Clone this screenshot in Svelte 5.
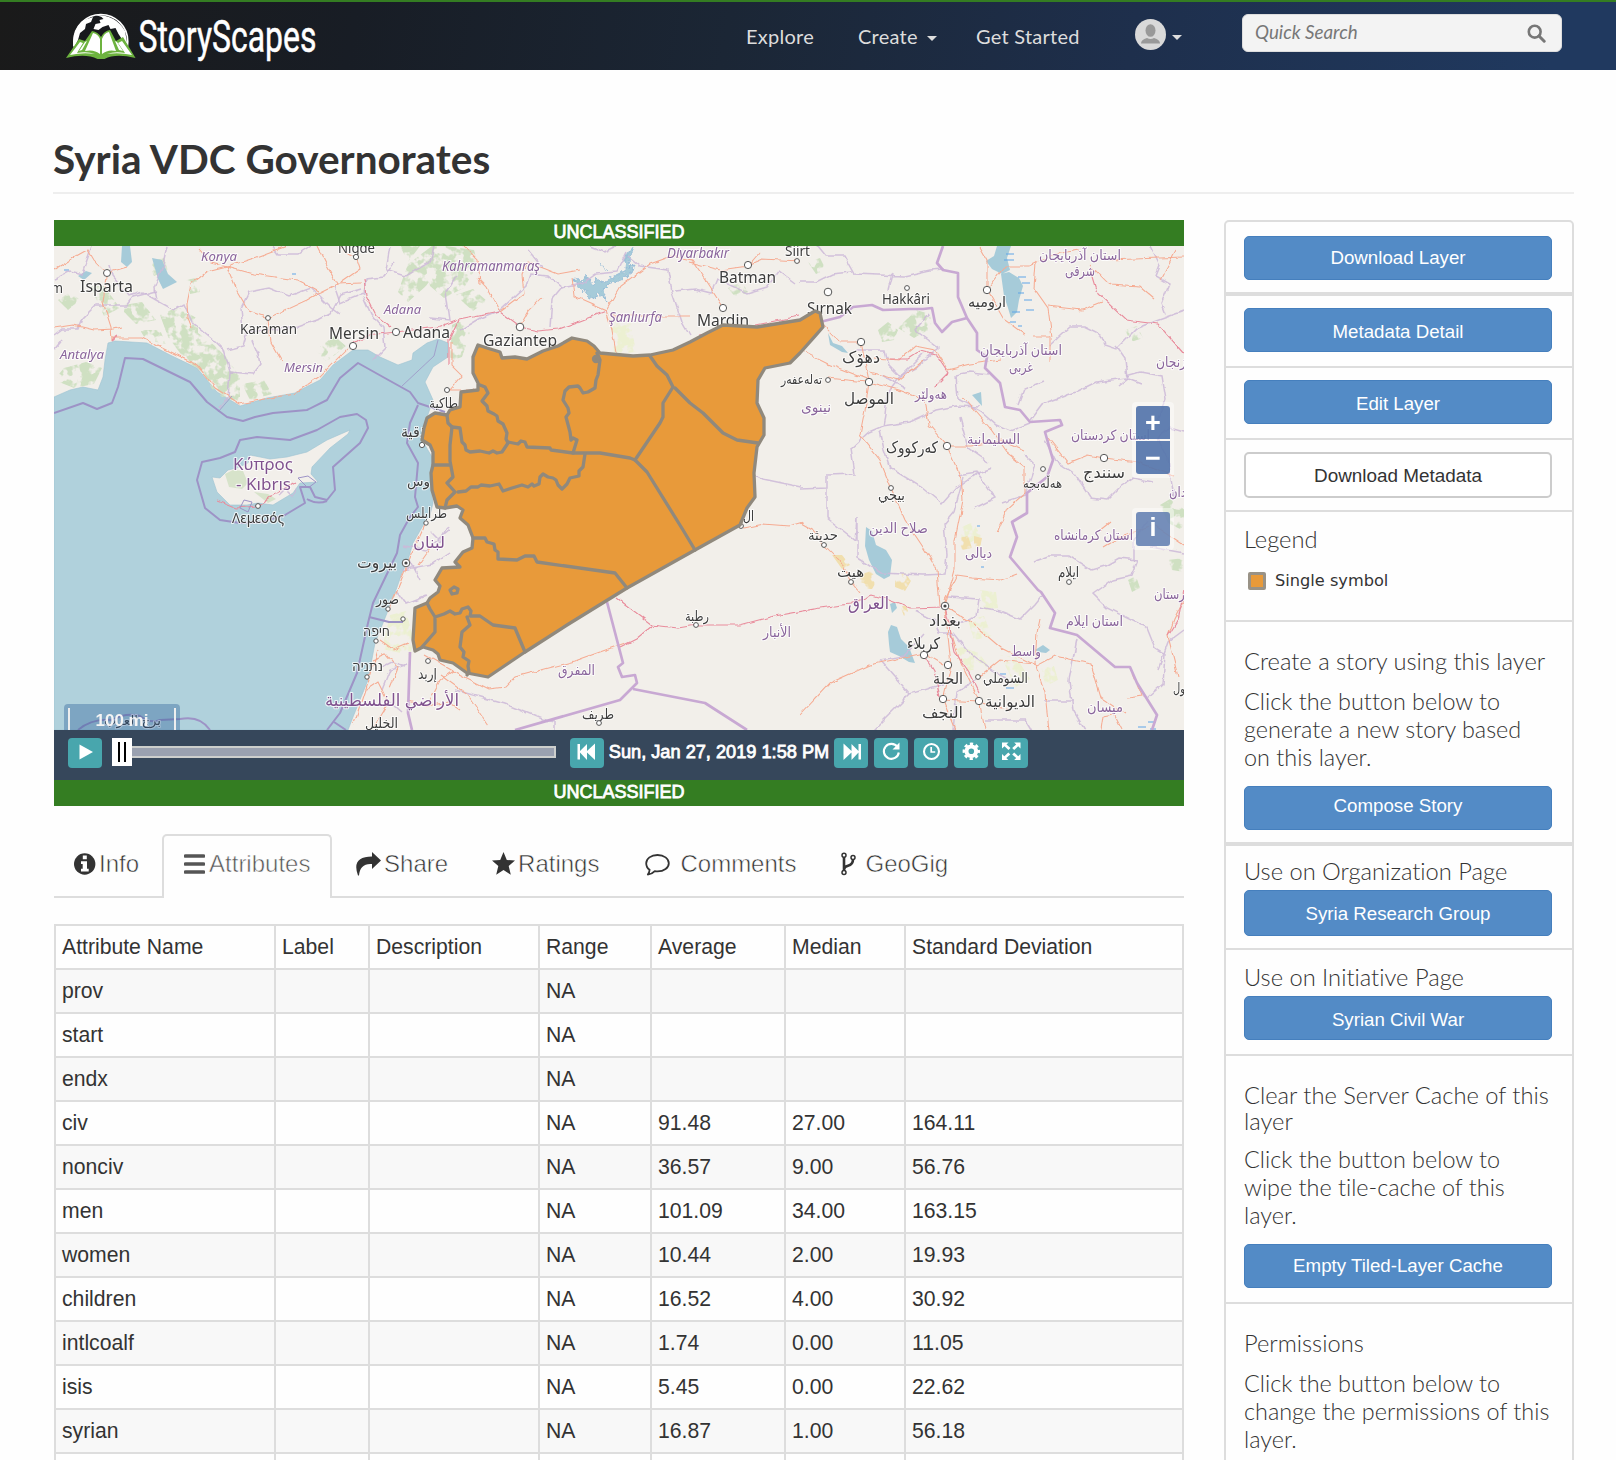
<script>
  const columns = ['Attribute Name', 'Label', 'Description', 'Range', 'Average', 'Median', 'Standard Deviation'];
  const rows = [
    ['prov', '', '', 'NA', '', '', ''],
    ['start', '', '', 'NA', '', '', ''],
    ['endx', '', '', 'NA', '', '', ''],
    ['civ', '', '', 'NA', '91.48', '27.00', '164.11'],
    ['nonciv', '', '', 'NA', '36.57', '9.00', '56.76'],
    ['men', '', '', 'NA', '101.09', '34.00', '163.15'],
    ['women', '', '', 'NA', '10.44', '2.00', '19.93'],
    ['children', '', '', 'NA', '16.52', '4.00', '30.92'],
    ['intlcoalf', '', '', 'NA', '1.74', '0.00', '11.05'],
    ['isis', '', '', 'NA', '5.45', '0.00', '22.62'],
    ['syrian', '', '', 'NA', '16.87', '1.00', '56.18'],
    ['', '', '', '', '', '', '']
  ];

  // text, left, baseline, width, size, kind (c = city, p = province, n = country)
  const labels = [
    ['m', 51, 293, 12, 15, 'c'], ['Isparta', 80, 292, 53, 16, 'c'], ['Konya', 201, 261, 36, 13, 'p i'],
    ['Niğde', 338, 253, 37, 14, 'c'], ['Antalya', 60, 359, 44, 13, 'p i'], ['Karaman', 240, 334, 57, 14, 'c'],
    ['Mersin', 329, 339, 50, 16, 'c'], ['Mersin', 284, 372, 39, 13, 'p i'], ['Adana', 384, 314, 37, 13, 'p i'],
    ['Adana', 403, 338, 47, 16, 'c'], ['Κύπρος', 233, 470, 60, 17, 'n'], ['- Kıbrıs', 236, 490, 55, 17, 'n'],
    ['Λεμεσός', 232, 523, 52, 14, 'c'], ['Kahramanmaraş', 442, 271, 98, 13.5, 'p i'], ['Gaziantep', 483, 346, 74, 16, 'c'],
    ['Diyarbakır', 667, 258, 62, 13.5, 'p i'], ['Siirt', 785, 256, 25, 14, 'c'], ['Batman', 719, 283, 57, 16, 'c'],
    ['Şanlıurfa', 609, 322, 53, 13.5, 'p i'], ['Mardin', 697, 326, 52, 16, 'c'], ['Şırnak', 807, 314, 45, 16, 'c'],
    ['Hakkâri', 882, 304, 48, 14, 'c'], ['طاكية', 429, 408, 29, 14, 'c'], ['ذقية', 401, 437, 25, 15, 'c'],
    ['وس', 407, 486, 23, 13, 'c'], ['طرابلس', 406, 518, 41, 14, 'c'], ['لبنان', 413, 548, 32, 16, 'n'],
    ['بيروت', 357, 568, 40, 16, 'c'], ['صور', 376, 604, 23, 14, 'c'], ['חיפה', 363, 636, 27, 15, 'c'],
    ['נתניה', 352, 671, 31, 14, 'c'], ['إربد', 418, 679, 19, 15, 'c'], ['الأراضي الفلسطينية', 325, 706, 134, 17, 'n'],
    ['الخليل', 365, 728, 33, 14, 'c'], ['المفرق', 558, 675, 37, 14, 'p'], ['طريف', 582, 719, 32, 14, 'c'],
    ['رطبة', 685, 621, 24, 14, 'c'], ['الأنبار', 763, 637, 28, 14, 'p'], ['ال', 743, 521, 11, 14, 'c'],
    ['دهۆک', 842, 363, 38, 16, 'c'], ['تەلەعفەر', 781, 384, 41, 13, 'c'], ['الموصل', 844, 404, 50, 16, 'c'],
    ['نینوى', 801, 412, 30, 14, 'p'], ['هەولێر', 915, 399, 32, 14, 'p'], ['ارومیه', 968, 307, 38, 15, 'c'],
    ['استان آذربایجان', 1039, 260, 82, 14, 'p'], ['شرقی', 1065, 276, 30, 14, 'p'],
    ['استان آذربایجان', 980, 355, 82, 14, 'p'], ['غربی', 1009, 372, 24, 14, 'p'], ['زنجان', 1156, 367, 30, 14, 'p'],
    ['استان کردستان', 1071, 440, 79, 14, 'p'], ['السليمانية', 967, 444, 53, 14, 'p'], ['کەرکووک', 886, 453, 52, 16, 'c'],
    ['بيجي', 878, 500, 27, 14, 'c'], ['سنندج', 1083, 478, 42, 16, 'c'], ['هەڵەبجە', 1023, 488, 39, 13, 'c'],
    ['دان', 1169, 497, 17, 14, 'p'], ['صلاح الدين', 869, 533, 59, 14, 'p'], ['حديثة', 808, 540, 30, 14, 'c'],
    ['هيت', 837, 577, 27, 14, 'c'], ['العراق', 848, 609, 41, 17, 'n'], ['بغداد', 929, 626, 32, 16, 'c'],
    ['كربلاء', 907, 649, 33, 16, 'c'], ['الحلة', 933, 684, 30, 16, 'c'], ['النجف', 922, 718, 41, 16, 'c'],
    ['الشوملي', 983, 683, 45, 14, 'c'], ['الديوانية', 985, 707, 50, 16, 'c'], ['ديالى', 965, 558, 27, 14, 'p'],
    ['واسط', 1011, 656, 30, 14, 'p'], ['استان کرمانشاه', 1054, 540, 79, 14, 'p'], ['ایلام', 1058, 577, 21, 15, 'c'],
    ['استان ایلام', 1066, 626, 57, 14, 'p'], ['ميسان', 1087, 712, 36, 14, 'p'], ['رستان', 1154, 599, 31, 14, 'p'],
    ['ول', 1173, 693, 12, 14, 'c'], ['برج العرب', 104, 725, 57, 13, 'c']
  ];

  const towns = [
    [107, 273, 3.5], [356, 257, 2.6], [268, 318, 2.4], [353, 346, 3.6], [396, 332, 3.6], [258, 506, 2.4], [520, 327, 3.8],
    [748, 265, 3.6], [723, 308, 3.6], [447, 390, 2.5], [797, 261, 2.4], [828, 292, 3.8], [907, 288, 2.4], [987, 290, 3.7],
    [861, 342, 3.7], [869, 382, 3.7], [828, 380, 2.4], [947, 446, 3.7], [891, 488, 2.4], [1104, 458, 3.7], [1043, 469, 2.4],
    [824, 545, 2.4], [851, 582, 2.4], [924, 655, 3.7], [948, 665, 3.7], [943, 699, 3.7], [979, 701, 3.7], [978, 677, 2.4],
    [1069, 582, 2.4], [426, 523, 2.2], [388, 609, 2.2], [403, 619, 2.2], [376, 641, 2.2], [367, 677, 2.2], [428, 661, 2.4],
    [599, 723, 2.4], [696, 625, 2.4], [741, 526, 2.4], [422, 445, 2.6]
  ];
  const capitals = [[406, 563], [945, 606]];

  const forests = [
    'M160 315l18-8 20 12 0 14 14 10 14 14 14 20 0 20-18 0-10-8-8-16-18-12-18-24z', 'M54 380l10-12 22-6 16 6-8 16-20 4z', 'M58 300l12-8 10 8-12 10z',
    'M398 292l10-28 24-18 18 2-10 18-14 20-18 16z', 'M424 255l22-9 28 4 4 14-14 24-20 10-14-12z', 'M452 325l12-6 6 14-8 24-12 4z',
    'M455 295l18-6 14 12-14 10z', 'M878 330l10-8 10 8-4 10-12 2z', 'M400 246h20l-12 16z',
    'M898 328l18-18 14 4 2 14-18 10z', 'M808 262l12-4 6 12-10 4z', 'M728 288l14-6 6 10-12 6z', 'M1160 505l10-6 16 12-2 20-16-8z',
    'M1168 560l16-2v14l-12-2z', 'M1128 580l8-4 4 12-8 4z', 'M214 378l16-4 10 14-2 14-12-4z', 'M242 384l22-4 8 14-22 6z', 'M316 350l18-14 12 10-20 16z',
    'M148 262l16-4 4 12-14 6z', 'M90 286l14 0 16 22-16 8z', 'M118 306l24-4 14 18-20 4z', 'M140 330l20 0 6 14-20-4z', 'M186 280l10-2 4 14-10 2z', 'M1125 330l12-4 6 12-12 4z'
  ];
  const scrub = [
    'M390 615l16-4 8 30-4 14-28-6z', 'M955 530l18-8 8 14-16 10z', 'M968 620l16-4 8 20-18 4z', 'M980 590l16 2 2 16-14 2z',
    'M610 320l20-2 6 34-22 2z', 'M955 645l24 8 10 14-22 4z', 'M1000 655l16 2 14 22-14 8z', 'M1040 668l14-2 4 14-12 6z'
  ];
  const sand = ['M860 575l10-4 8 8-6 10-12 0z', 'M895 575l10-2 6 8-6 10-10-4z', 'M832 555l10 0 8 10-8 4z', 'M958 538l10-2 4 12-10 2z', 'M974 536l8 2-2 10-6-2z', 'M900 606l6 0 4 10-6 0z'];

  const adminLines = [
    'M54 279l16-8 12 3 10-28', 'M167 246l-5 22-8 20 2 12-14-8-14 4-16-20-2-12M156 300l18 10 10-6 8 18 22 18 10 10 6 22-2 26-8 10',
    'M227 350l16-4 4-14 50-5 22-8 12-6 10-18 20-6', 'M54 335l8-6 16 0 4-10 14-14 30 0 6-8 24-6', 'M243 330l-2-22 8-16 20-4 20 8 22-8 20 20 8 6',
    'M272 246l6 8 20 0 12-8M390 246l-4 24 20 6 24-14 4-16', 'M334 285l6 18 24-10 2-14 18-2 10-14', 'M230 372l22 2 8-10-2-10-6-14', 'M373 360l12-12-2-20-12-14-8-18',
    'M430 318l20 2-4-28 10-16M460 330l20-12 20-8 26-24 4-12 18 2 14 12 20-4 14-10 20-2 10-20', 'M550 327l2-28 10-12M528 250l10 12 6 6', 'M628 256l12 10 28 4 4 22 10 30 8 14M675 291l20-2 16 4 6-14 30 14 20-6 12-16 16 12',
    'M590 246l14 6 12-6M818 246l8 10 18 0 10 18 50 2 26-6 14-1M800 282l16 0 16-8 20-2M892 274l-4 16', 'M855 350l30 0 4 16 10 10 16-8 24-20-24-18 14-16',
    'M882 375l10 6 14 8M827 475l28-1-4-26 18-16 14-6 2-10 2-22 14-18 22-22', 'M800 489l27-1v-12M827 488v30l28 22 2-22v40l24 15 42 2 22-1 2-20-3-30 10-12 10-36',
    'M880 430l4 20 6 18 30 18 22 18 14-16 20-14 16-6M882 426l28-4 26-12 20-4 24 1', 'M956 375l14-3 20 2M956 375l2 24 22 12 16 14 14 6 20-8', 'M960 418l8 30 20 14M957 475l20-3 18 26-20 10',
    'M1025 455l10 10-10 30-24 8M1030 420l12-16 34-12 20-10 30-4 16 6', 'M1018 405l6-16 20-8M1126 376l14-4 22 4 4 24-8 20', 'M1050 345l20-18 14 0 16 8 4 10 12 4 20-20 20-8 28-10',
    'M1116 345l10 14 2 20-10 8M1045 440l10 20 20 14 16 24 16 2 14-14 12-8 20 4', 'M1150 246l10 20-4 10 14 8-8 20 4 10', 'M1184 432l-14-4-12 10 10 20 6 40',
    'M1033 562l16-6 20 0 22 14 14-4 14-8 18 2-6 16-18 4-20 14 14 14 40 20 8 20 10 6-2 30-16 14', 'M948 597l31 2-3 18-16 6-14-2', 'M980 607l20 4 20 8 14-14 8-10',
    'M915 611l20 10 4 12 14 0 16 20 24 18 14 6', 'M880 660l24-4 20-22M880 660l30 34 40-12M910 694l-36 36M953 730l4-38 20-12', 'M1077 640l-8 40 4 30 12 20M1044 701l30 0', 'M985 720l40 0 6 10',
    'M1150 547l12 2 22 4M1134 560l0-20 14-20', 'M455 690l50 14 40 16 10 2v10', 'M755 475l8 4 38 8', 'M404 546l22 4 24-20M402 570l30-6 18-12M396 590l10 14 20-8M410 560l10 20M430 532l10 10 8-16',
    'M382 690l8-20 18-6M388 700l14 12M380 668l12-6 14 4', 'M1184 630l-16 12-10 28', 'M54 350l8-10', 'M280 495l6-6 6 6 4-6'
  ];
  const roadLines = [
    'M54 270l16-10 18-10 6 10 13 13 20-6M107 277l-4 25 8 25 1 13', 'M227 267l-20 5-16 12-4 20 1 14 4 10M227 267l10 24 12 20 19 7 39-18 14-8 16-8 24-1', 'M227 267l26 7 44 6 22 12',
    'M227 267l-16-4-12-14M227 267l30-10 30-11M317 246l10 20 10 18M268 320l3 22 11 19', 'M54 328l20-3 20 5 20-1 8-2M112 338l30 0 28 14 27 13 18 23 25 16 30-6 24-4 26-18 28-28',
    'M340 246l8 8 8 3 4 12-20 14', 'M500 312l-14-26-8-8M520 325l8-14 14-14M500 312l24-18-2-20 6-12 30 12 22-4M572 278l2 18 32 14 6 20 4 24', 'M606 310l14-24 30-22 22-8 20 4 14 20 18 28M690 262l30 8 28-4 12-14',
    'M464 246l14 14 2 24M610 316l80 0M748 265l14-6 38 2', 'M452 342l0 24 10 10-12 14 30 0', 'M823 325l17 17 21 0 8 40-4 28-5 25 20 25 11 28 14 32 20 30 12 20 3 36',
    'M869 382l30 8 26 10 4 25 18 21 14 32 2 22-8 40 0 30-10 36', 'M869 372l30 8 24-20M800 350l28 14 41 16M828 378l38 4', 'M875 358l24 2 16-14 20 4 12 18M947 370l24-6 30-4', 'M947 446l24 0 30-6 24 10',
    'M963 397l26 30 18 26 18 14 0 26-18 16-10 24', 'M987 290l0-30-8-14M987 290l16 28 22 16M1034 337l16 0 0 24M987 290l18-24 24 0 26-12 24-4', 'M1036 262l-2 26 14 20 4 30M1048 306l34 4 20-8',
    'M1090 265l20 20 30 2 14 12M1110 260l74-3M1176 250l-16 30', 'M1048 438l20 25 20-8 16 3 34 4 36 14', 'M1184 545l-30-20-30 10-20 12M1100 530l10-8',
    'M824 545l-10-14-14-8M824 545l16 16 11 21 8 10', 'M945 606l28 18 28 24 36 18 18-10 36 8 10 34 24 16', 'M945 606l6 60-8 34 12 30M945 612l14 46 20 42 6 30M943 700l36 2 30 8', 'M800 715l30-32 40-18 54-12 20 12',
    'M1035 663l10 30 4 37M1035 663l2-30 3-14M980 676l20-16 34 4M945 600l12-24 14 2 30 2 16-6', 'M1102 730l2-14 10-2 8 16M1184 600l-10 20-6 16 10 40', 'M1130 666l12 30-14 2',
    'M425 655l28 16 36 18 16-2 10-10 60-16 50-18M440 675l28 20 20 30', 'M380 640l14 10 14-6M372 660l14-6 12 14-8 20M366 690l12-8 10 20-14 24M378 650l-10 30-14 44', 'M430 700l10-20 14-10M408 700l20 6 20-4 12 8',
    'M743 528l20-4 26 2 14-4', 'M400 583l12-30 14-30M388 612l14-34M432 545l-14 20'
  ];
  const majorLines = [
    'M353 345l14-10 30-3 40-5 22-8 40-8M459 320l-10 20 0 24', 'M500 312l20 15 18 4 20-2 22-8 26-10', 'M364 279l2 16 10 20 14 12', 'M617 598l35 27 26 3 18-3 44 0 30-8 50-9 30-4 22-9 14 4 24 9 35-1',
    'M1090 268l8 26 28 26 32 4 26 30', 'M620 647l16-8 16-13', 'M890 359l18 0 12-8 16 4 12 18-14 14', 'M945 606l10 46 14 20 10 20', 'M700 335l30-5 70-14',
    'M112 340l6-4M217 500l20 8 20-2 14-10 24-14', 'M924 655l10 16 6 26', 'M1184 590l-6 30-10 16'
  ];

  const actions = ['loop', 'clock', 'gear', 'expand'];
</script>

<div class="page">
  <header class="topbar">
    <svg class="brand" viewBox="62 8 260 58" role="img" aria-label="StoryScapes">
      <defs><clipPath id="globe"><rect x="66" y="8" width="72" height="42" /></clipPath></defs>
      <g clip-path="url(#globe)">
        <circle cx="100.8" cy="41.5" r="27" fill="#17191d" stroke="#fff" stroke-width="1.6" />
        <path d="M73 46q0-18 11-26l9-3-2 5-5 2-1 5-5 4-2 7-3 6z" fill="#fff" />
        <path d="M96 15q20 0 29 16l2.500 14-5-5-4-6-3-6-5 1-2-4-6 2-4 3-5-1 2-5 5-1-1-3 4-1-2-2z" fill="#fff" />
      </g>
      <path d="M66 58l13-19 6 2 7-10q6 1 9 6 3-6 9-7l6 11 7-4 12.500 21q-20-5-31 1h-7q-12-6-31.500-1z" fill="#6db33f" />
      <path d="M70 55l10-13 3 1-6 10q10-2 18 1-12-2-25 1zM132 55l-10-14-4 2 7 10q-10-2-18 1 12-2 25 1z" fill="#fff" />
      <path d="M85 51l8-18q5 1 7 6v15q-6-5-15-3zM116 51l-7-19q-5 1-7 7v15q6-5 14-3z" fill="#fff" />
      <path d="M79 51l6-9 2-1-5 9zM123 51l-6-9-2-1 4 9z" fill="#fff" />
      <text x="138.500" y="52" textLength="178" lengthAdjust="spacingAndGlyphs" class="brandname">StoryScapes</text>
    </svg>
    <nav>
      <a class="explore">Explore</a>
      <a class="create">Create<i class="caret"></i></a>
      <a class="started">Get Started</a>
      <a class="account">
        <svg width="31" height="31" viewBox="0 0 31 31"><circle cx="15.500" cy="15.500" r="15.500" fill="#d9d9d9" /><ellipse cx="15.500" cy="11.500" rx="5" ry="6.300" fill="#999" /><path d="M6 24.500q0-4 6-5.500 3.500 2 7 0 6 1.500 6 5.500z" fill="#999" /></svg>
        <i class="caret"></i>
      </a>
    </nav>
    <div class="search">
      <span>Quick Search</span>
      <svg width="19" height="19" viewBox="0 0 19 19"><circle cx="7.700" cy="7.700" r="5.900" fill="none" stroke="#777" stroke-width="2.600" /><path d="M12 12l5.200 5.200" stroke="#777" stroke-width="3" stroke-linecap="round" /></svg>
    </div>
  </header>

  <h1>Syria VDC Governorates</h1>

  <div class="body">
    <main>
      <div class="banner">UNCLASSIFIED</div>
      <div class="mapbox">
        <svg class="map" viewBox="54 246 1130 484" width="1130" height="484">
          <defs>
            <filter id="rough" x="-2%" y="-2%" width="104%" height="104%">
              <feTurbulence type="fractalNoise" baseFrequency="0.1" numOctaves="2" seed="4" />
              <feDisplacementMap in="SourceGraphic" scale="5" xChannelSelector="R" yChannelSelector="G" />
            </filter>
            <filter id="jagged" x="-2%" y="-2%" width="104%" height="104%">
              <feTurbulence type="fractalNoise" baseFrequency="0.22" numOctaves="2" seed="6" />
              <feDisplacementMap in="SourceGraphic" scale="7" xChannelSelector="R" yChannelSelector="G" />
            </filter>
            <filter id="patchy" x="-2%" y="-2%" width="104%" height="104%">
              <feTurbulence type="fractalNoise" baseFrequency="0.11" numOctaves="3" seed="9" />
              <feColorMatrix values="0 0 0 0 0  0 0 0 0 0  0 0 0 0 0  0 7 0 0 -2.900" result="m" />
              <feComposite in="SourceGraphic" in2="m" operator="in" />
            </filter>
          </defs>
          <rect x="54" y="246" width="1130" height="484" fill="#f2efea" />
          <path class="water" d="M54 397L70 390 83 387 98 390 103 377 105 360 108 343 115 341 147 343 170 355 197 368 217 392 240 406 267 398 295 393 300 390 320 380 333 365 353 350 368 350 380 357 398 365 412 360 413 353 427 343 438 339 448 343 448 357 433 367 425 382 433 400 425 423 422 440 432 457 430 483 433 503 430 515 425 522 413 543 408 560 402 573 396 590 387 613 375 643 368 680 353 717 348 730H54Z" />
          <g filter="url(#patchy)">
            {#each forests as d}<path {d} class="forest" />{/each}
            {#each scrub as d}<path {d} class="scrub" />{/each}
            {#each sand as d}<path {d} class="sand" />{/each}
          </g>
          <path class="land" d="M212 477L220 478 228 470 237 468 248 463 250 455 270 459 287 457 307 452 327 440 350 430 348 434 330 448 312 467 311 474 318 482 300 483 293 493 273 505 258 503 247 505 230 505 217 492Z" />
          <path class="forest" opacity=".8" d="M225 474l8-4 10 1 5 12-6 6-13-2zM254 492l14 2 8 5-8 4z" />
          <g class="lakes">
            <path d="M122 246l8 0 2 16-5 5-6-5zM152 258l10 2 6 14 9 8-14 7-5-10zM78 276l8-5 6 2-8 7z" />
            <path d="M997 246l14 0-4 12 3 12-8 4-10-5-6-8 8-5zM1001 274l8-2 10 6 4 8-4 14-2 12-6 6-3-10-4-12z" />
            <path d="M866 527l6 4 4 14 10 5 6 10-2 16-6 3-8-5-7-14-4-14zM888 632l3-7 6 2 4 12 8 8 6 16-6-1-10-6-9-4-1-8zM890 604l5-2 2 6-5 5zM972 395l9-3 1 14zM1035 650l8-5 7 5-4 3-8-1z" />
            <path d="M828 333l5 10 9 3 6 7-6-1-12-7zM431 648l4-3 2 10z" />
          </g>
          <path class="reservoir" filter="url(#jagged)" d="M574 278l8 4 3-7 8 10 4-8 5 6 8-4 10-5 8-7 6-2-3 9-10 6-12 4-6 6 4 10-8-5-9 3-4-8-9-5zM627 252l7-4-5 12 2 6-6 2zM582 290l6 6M606 270l-6-8" />
          <path class="ponds" d="M1006 254h8M1004 260h10M1018 277h8M1022 283h8M1018 293h6M1024 300h8M1012 312h8M1026 310h8M1010 322h6M1018 326h4M1138 727h8M1148 722h8M1150 729h6M1000 674h6M1006 688h8M292 274h4M64 270h5M977 526h3M981 567h3" />
          <g filter="url(#rough)">
            {#each adminLines as d}<path {d} class="admin" />{/each}
            {#each roadLines as d}<path {d} class="road" />{/each}
            {#each majorLines as d}<path {d} class="major" />{/each}
          </g>
          <g class="sea">
            <path d="M54 413L83 403 97 409 112 403 118 387 125 358 143 359 190 382 207 402 227 417 243 421 255 417 273 413 307 410 327 400 340 378 358 363 383 377 410 392 418 403 445 412" />
            <path d="M418 405L410 423 407 443 418 463 415 497 418 507 410 517 400 535 397 553 373 603 368 623 357 673 340 713 327 730" />
            <path d="M197 480L202 462 220 458 235 452 240 440 257 437 290 440 317 430 340 417 357 414 366 420 368 428 360 443 333 467 335 490 327 500 315 497 310 487 300 487 305 503 285 515 262 522 240 523 220 520 205 508Z" />
            <path d="M78 730q14-12 34-10 14-8 28-4 10 8 20 4l20-1q20-4 30 11M327 501q-10 4-20-2M369 617l20 5h14M334 722l12 8" />
            <path d="M240 508l4-8 8 2-4 10zM298 478l10-2 8 6-8 6z" stroke-width="1" />
          </g>
          <path class="sea thin" d="M402 386l32-30 4-16M218 412l14-16" />
          <path class="border" d="M820 322L840 317 853 307 872 305 883 310 910 309 923 309 932 308 935 323 942 332 952 322 967 318 958 297 958 273 943 270 937 263 943 246M967 318L977 333 977 350 987 357 985 368 1000 383 1005 407 1020 410 1030 422 1060 420 1062 425 1045 432 1053 460 1047 477 1027 493 1027 513 1012 522 1017 537 1010 557 1038 590 1041 592 1055 613 1050 628 1077 635 1115 667 1130 667 1137 683 1157 715 1152 730" />
          <path class="border" d="M607 602L623 663 618 667 622 677 635 675 637 683 620 700 515 730M633 689L705 703 747 730M410 652L408 713 412 730" />
          {#each labels as [t, x, y, w, s, k]}
            <text {x} {y} textLength={w} lengthAdjust="spacingAndGlyphs" font-size={s} class={k}>{t}</text>
          {/each}
          {#each towns as [cx, cy, r]}<circle {cx} {cy} {r} class="town" />{/each}
          {#each capitals as [cx, cy]}<circle {cx} {cy} r="3.800" class="town" /><circle {cx} {cy} r="1.600" fill="#444" />{/each}
          <path class="syria" d="M478 345L487 348 500 352 502 358 515 357 527 359 543 351 558 346 572 338 587 341 594 346 600 353 633 356 650 355 673 350 690 342 707 333 723 325 757 327 800 320 815 311 820 313 823 327 800 353 790 363 765 368 758 380 757 403 764 418 764 435 757 447 754 473 755 497 747 508 740 525 695 550 627 588 567 625 525 652 488 677 467 673 453 663 440 660 438 654 433 650 423 647 415 651 413 640 415 608 427 603 430 598 438 592 440 586 435 580 442 568 460 567 455 562 463 552 472 548 473 538 468 525 460 518 463 510 457 506 445 508 437 507 432 490 431 473 433 465 433 452 430 445 422 440 424 428 427 418 435 413 447 415 450 410 460 407 461 392 478 390 478 383 473 373 473 357Z" />
          <g class="gov">
            <path d="M447 415l1 8 4 4-2 18 0 16 3 16-6 6 8 9-8 8-2 8M433 465h17" />
            <path d="M452 427l8 1 2 14 3 3 1 5 4 2 10-1 9 2 4-2 4 2 5-1 6-9-2-4 1-6-4-9-5-3-1-5-3-2-6-3-1-5-5-5 6-8-3-6-5-2" />
            <path d="M508 442l10 2 3-3 4 1 2 5 23 1 1 2 22 3 27 0 30 5 5 2" />
            <path d="M573 453l4-13-4-2-2 2-1-8-4-15 3-4-1-5-5-8 2-9 4-4 9-1 2 2 3 5 5-1 7-4 1-8 2-5 2-15-3-7" />
            <path d="M650 356l7 10 10 9 6 12-10 16 0 14-3 6-25 37M675 388l15 15 13 10 20 20 14 7 21 3M635 460l12 12 36 58 12 20" />
            <path d="M585 454l-2 13-4 4 0 5-9 2-3 6-5 5-4-4-2-5-3-2-5-1-5-3-3 3-1 7-5 2-2-2-4 3-6-2-10 3-9 3-4-7-9 2-9-1-3 2-7 0-5 4-8 1" />
            <path d="M473 538l12 0 2 4 7 2 1 6 3 2 0 7 19 1 8-4 9 0 3 6 78 11 12 15" />
            <path d="M427 603l3 6 5 8 0 15-13 15M435 617l9-3 6-3 5 3 5-1 2-4 6-2 3 4-1 5 10 0 13 9 22 3 10 24M467 617l3 8-8 7-2 15 4 5-1 5 6 4-1 5 1 6-2 3" />
            <path d="M450 590l4-3 4 2-1 4-5 1z" />
            <circle cx="596" cy="359" r="2.500" fill="#90897d" />
          </g>
        </svg>
        <div class="ctl zoom"><b>+</b><b>−</b></div>
        <div class="ctl info"><b>i</b></div>
        <div class="scale"><span>100 mi</span></div>
      </div>
      <div class="player">
        <button class="tb play" aria-label="Play"><svg viewBox="0 0 34 30"><path d="M11.500 6.500v15l13.500-7.500z" fill="#fff" /></svg></button>
        <div class="slider"><i class="handle"></i><i class="track"></i></div>
        <button class="tb" aria-label="Previous"><svg viewBox="0 0 34 30"><path d="M7.500 6h2.500v7l7-7v7l8-7.500v16.500l-8-7.500v7.500l-7-7.500v7h-2.500z" fill="#fff" /></svg></button>
        <span class="date">Sun, Jan 27, 2019 1:58 PM</span>
        <button class="tb" aria-label="Next"><svg viewBox="0 0 34 30"><path d="M27 6h-2.500v7l-7-7v7l-8-7.500v16.500l8-7.500v7.500l7-7.500v7h2.500z" fill="#fff" /></svg></button>
        {#each actions as name}
          <button class="tb gap" aria-label={name}>
            <svg viewBox="0 0 34 30">
              {#if name === 'loop'}
                <path d="M23.500 9a7.500 7.500 0 1 0 1.300 5.500" fill="none" stroke="#fff" stroke-width="2.100" /><path d="M25.500 4.500v7h-7z" fill="#fff" />
              {:else if name === 'clock'}
                <circle cx="17.500" cy="13.500" r="7.500" fill="none" stroke="#fff" stroke-width="2.100" /><path d="M17.200 9v5h4" fill="none" stroke="#fff" stroke-width="1.700" />
              {:else if name === 'gear'}
                <circle cx="17.300" cy="13.300" r="4.800" fill="none" stroke="#fff" stroke-width="4" /><circle cx="17.300" cy="13.300" r="7.300" fill="none" stroke="#fff" stroke-width="2.800" stroke-dasharray="3.200 2.530" stroke-dashoffset="1.600" />
              {:else}
                <path d="M8 4.500h6.500l-2 2 4 3.500-2 2-4-3.800-2.500 2.300zM26.500 4.500v6l-2.300-2.300-4 3.800-2-2 4-3.500-2-2zM8 22v-6l2.300 2.300 4-3.800 2 2-4 3.500 2 2zM26.500 22h-6.300l2-2-4-3.500 2-2 4 3.800 2.300-2.300z" fill="#fff" />
              {/if}
            </svg>
          </button>
        {/each}
      </div>
      <div class="banner">UNCLASSIFIED</div>

      <div class="tabs">
        <a class="tab first">
          <svg width="22" height="24" viewBox="0 0 22 24"><circle cx="10.700" cy="12" r="10.700" fill="#333" /><path d="M8.800 3.600h4v3.700h-4zM7 9.200h6v7.500h1.700v2.800H7v-2.800h1.700v-4.800H7z" fill="#fff" /></svg><span>Info</span>
        </a>
        <a class="tab active">
          <svg width="21" height="24" viewBox="0 0 21 24"><path d="M1.500 4h18M1.500 12h18M1.500 20h18" stroke="#555" stroke-width="3.600" stroke-linecap="round" /></svg><span>Attributes</span>
        </a>
        <a class="tab share">
          <svg width="25" height="24" viewBox="0 0 25 24"><path d="M16 0l9 8.500-9 8.500v-5q-12-1-13 11.500h-1q-7-19 14-19z" fill="#333" /></svg><span>Share</span>
        </a>
        <a class="tab ratings">
          <svg width="23" height="24" viewBox="0 0 23 24"><path d="M11.500 0l3.300 7.900 8.200.6-6.300 5.600 2.100 8.600-7.300-4.600-7.300 4.600 2.100-8.600L0 8.500l8.200-.6z" fill="#333" /></svg><span>Ratings</span>
        </a>
        <a class="tab comments">
          <svg width="25" height="24" viewBox="0 0 25 24"><path d="M12.500 3c6.500 0 11.300 3.600 11.300 8.200s-4.800 8.200-11.300 8.200q-1.300 0-2.700-.3-2.800 3-7 3.400 1.700-2 1.800-4.700C2.400 16.300 1.200 13.900 1.200 11.200 1.200 6.600 6 3 12.500 3z" fill="none" stroke="#333" stroke-width="1.800" stroke-linejoin="round" /></svg><span>Comments</span>
        </a>
        <a class="tab geogig">
          <svg width="15" height="24" viewBox="0 0 15 24"><g fill="none" stroke="#333" stroke-width="1.500"><circle cx="3" cy="3.200" r="2" /><circle cx="3" cy="20.500" r="2" /><circle cx="12" cy="5.500" r="2" /></g><path d="M3 5v14M12 7.500q0 5-5 6.300-4 1-4 4" fill="none" stroke="#333" stroke-width="2.600" /></svg><span>GeoGig</span>
        </a>
      </div>

      <table>
        <colgroup><col class="c1" /><col class="c2" /><col class="c3" /><col class="c4" /><col class="c5" /><col class="c6" /><col /></colgroup>
        <thead><tr>{#each columns as c}<th>{c}</th>{/each}</tr></thead>
        <tbody>
          {#each rows as r}<tr>{#each r as v}<td>{v}</td>{/each}</tr>{/each}
        </tbody>
      </table>
    </main>

    <aside>
      <section class="short thick"><a class="btn">Download Layer</a></section>
      <section class="short"><a class="btn low">Metadata Detail</a></section>
      <section class="short"><a class="btn low">Edit Layer</a></section>
      <section class="short"><a class="btn plain">Download Metadata</a></section>
      <section class="legend">
        <h4>Legend</h4>
        <div class="symbol"><i></i>Single symbol</div>
      </section>
      <section class="story thick">
        <h4>Create a story using this layer</h4>
        <p class="narrow">Click the button below to generate a new story based on this layer.</p>
        <a class="btn high">Compose Story</a>
      </section>
      <section class="org"><h4>Use on Organization Page</h4><a class="btn tall">Syria Research Group</a></section>
      <section class="org init"><h4>Use on Initiative Page</h4><a class="btn low">Syrian Civil War</a></section>
      <section class="cache">
        <h4>Clear the Server Cache of this layer</h4>
        <p class="narrow">Click the button below to wipe the tile-cache of this layer.</p>
        <a class="btn">Empty Tiled-Layer Cache</a>
      </section>
      <section class="perm">
        <h4>Permissions</h4>
        <p>Click the button below to change the permissions of this layer.</p>
      </section>
    </aside>
  </div>
</div>

<style>
  :global(body) { margin: 0; background: #fff; }
  .page { width: 1616px; height: 1460px; overflow: hidden; background: #fefefe; color: #333; font-family: "Liberation Sans", Arial, sans-serif; }
  .page :global(*) { box-sizing: border-box; }

  .topbar { height: 70px; border-top: 2px solid #347d22; background: linear-gradient(100deg, #1a1a1a 0%, #181d25 22%, #1b2635 45%, #1e2f4c 70%, #20395f 96%); display: flex; align-items: flex-start; padding-left: 62px; }
  .brand { width: 260px; height: 58px; margin-top: 6px; flex: none; }
  .brandname { font: 400 45px Roboto, sans-serif; fill: #fff; stroke: #fff; stroke-width: .5px; }
  nav { display: flex; height: 68px; margin-left: 424px; color: #ddd; font: 20px/68px Lato, sans-serif; letter-spacing: .25px; white-space: nowrap; }
  nav a { display: flex; align-items: center; height: 68px; }
  .explore { width: 112px; }
  .create { width: 118px; }
  .started { width: 159px; }
  .caret { width: 0; height: 0; border: 5.5px solid transparent; border-top-color: #ddd; border-bottom: 0; margin-left: 9px; margin-top: 5px; }
  .account { width: 107px; }
  .account svg { margin-top: -4px; }
  .account .caret { margin-left: 6px; margin-top: 2px; }
  .search { width: 320px; height: 38px; margin-top: 12px; padding: 0 15px 0 12px; display: flex; align-items: center; justify-content: space-between; border-radius: 6px; background: #f3f3f3; border: 1px solid #ddd; font: italic 18.800px/34px Lato, sans-serif; color: #777; }
  .search span { margin-top: -2px; }

  h1 { margin: 63px 42px 0 53px; height: 61px; border-bottom: 2px solid #eee; font: 700 40.500px/52px Lato, sans-serif; color: #333; }
  .body { display: flex; justify-content: space-between; align-items: flex-start; margin: 26px 42px 0 54px; }
  main { width: 1130px; }
  .banner { height: 26px; background: #347d22; color: #fff; text-align: center; font-size: 18px; line-height: 24px; -webkit-text-stroke: .8px #fff; }
  .mapbox { position: relative; height: 484px; overflow: hidden; }
  .map { display: block; font-family: "Noto Sans", "DejaVu Sans", sans-serif; }
  .water { fill: #b0d1dc; stroke: #9dc3d2; stroke-width: .6; }
  .land { fill: #f2efea; stroke: #9dc3d2; stroke-width: .6; }
  .forest { fill: #cfe0c2; }
  .scrub { fill: #ecf0d2; }
  .sand { fill: #f1dfae; }
  .lakes path { fill: #a6cbd9; }
  .reservoir { fill: #a6cbd9; stroke: #8fb8d6; stroke-width: .8; }
  .ponds { stroke: #5fa5e8; stroke-width: 1.200; fill: none; }
  .admin { fill: none; stroke: #cdb8d8; stroke-width: 1.500; opacity: .85; }
  .road { fill: none; stroke: #f6ab92; stroke-width: 1.050; }
  .major { fill: none; stroke: #e98c9c; stroke-width: 1.150; }
  .sea { fill: none; stroke: #9d93c6; stroke-width: 2; stroke-linejoin: round; }
  .thin { stroke-width: .8; }
  .border { fill: none; stroke: #c8a8d3; stroke-width: 2.700; stroke-linejoin: round; }
  .map text { stroke: #fff; stroke-opacity: .75; stroke-width: 2.200px; paint-order: stroke; stroke-linejoin: round; fill: #3c3c3c; }
  .map .p { fill: #8a659c; }
  .map .i { font-style: italic; }
  .map .n { fill: #80528f; }
  .town { fill: #fff; stroke: #555; stroke-width: 1; }
  .syria { fill: #e89a3a; stroke: #90897d; stroke-width: 3.300; stroke-linejoin: round; }
  .gov { fill: none; stroke: #90897d; stroke-width: 3.300; stroke-linejoin: round; stroke-linecap: round; }

  .ctl { position: absolute; right: 10px; padding: 4px; border-radius: 4px; background: rgba(255, 255, 255, .45); display: grid; gap: 2px; }
  .ctl b { width: 34px; height: 33px; background: rgba(72, 107, 165, .86); color: #fff; font: 700 27px/34px "Liberation Sans", Arial, sans-serif; text-align: center; border-radius: 0 0 3px 3px; }
  .ctl b:first-child { border-radius: 3px 3px 0 0; line-height: 35px; }
  .zoom { top: 156px; }
  .info { top: 262px; }
  .ctl.info b { height: 34px; background: rgba(96, 125, 176, .86); border-radius: 3px; line-height: 31px; font-size: 25px; }
  .scale { position: absolute; left: 10px; top: 458px; width: 116px; height: 40px; padding: 4px; background: rgba(36, 90, 150, .36); border-radius: 4px; }
  .scale span { display: block; width: 108px; height: 34px; border: 2px solid #eee; border-top: 0; color: #f4f4f4; text-align: center; font: 700 17px/26px "Liberation Sans", Arial, sans-serif; }

  .player { height: 50px; background: #36475b; display: flex; align-items: flex-start; padding: 8px 0 0 14px; }
  .tb { width: 34px; height: 30px; flex: none; border: 0; padding: 0; border-radius: 4px; background: #48a6ad; }
  .tb svg { display: block; width: 34px; height: 30px; }
  .gap { margin-left: 6px; }
  .slider { display: flex; width: 444px; margin: 0 14px 0 10px; }
  .handle { width: 20px; height: 28px; background: linear-gradient(90deg, #fff 6px, #000 6px 8px, #fff 8px 12px, #000 12px 14px, #fff 14px) center / 20px 20px no-repeat #fff; }
  .track { flex: 1; height: 12px; margin-top: 8px; background: #9aa1b0; border: 2px solid #cdcfcd; border-left: 0; }
  .date { width: 230px; text-align: center; color: #fff; font-size: 18.200px; line-height: 28px; white-space: nowrap; -webkit-text-stroke: .8px #fff; }

  .tabs { display: flex; height: 64px; margin-top: 28px; border-bottom: 2px solid #ddd; }
  .tab { display: flex; align-items: center; height: 64px; padding: 0 20px 6px; margin-right: 2px; border: 2px solid transparent; border-bottom: 0; font-size: 24px; color: #333; }
  .tab span { -webkit-text-stroke: .55px #fefefe; margin-left: 3px; }
  .tab svg { flex: none; }
  .first { padding-left: 18px; padding-right: 19px; }
  .active { width: 170px; border-color: #ddd; border-radius: 5px 5px 0 0; background: #fefefe; color: #555; }
  .active span { margin-left: 4px; }
  .share { padding-right: 18px; }
  .ratings span { margin-left: 3px; }
  .ratings { padding-right: 20px; }
  .comments span { margin-left: 10px; }
  .comments { padding-right: 19px; }
  .geogig span { margin-left: 9px; }

  table { width: 1130px; margin-top: 26px; border-collapse: collapse; table-layout: fixed; font-size: 21.200px; }
  .c1 { width: 220px; }
  .c2 { width: 94px; }
  .c3 { width: 170px; }
  .c4 { width: 112px; }
  .c5 { width: 134px; }
  .c6 { width: 120px; }
  th, td { height: 44px; border: 2px solid #ddd; padding: 0 6px; text-align: left; font-weight: 400; line-height: 30px; white-space: nowrap; }
  tbody tr:nth-child(odd) { background: #f8f8f8; }

  aside { width: 350px; height: 1300px; border: 2px solid #ddd; border-radius: 5px; }
  section { padding: 12px 20px 0 18px; border-bottom: 2px solid #ddd; color: #333; }
  .short { height: 72px; }
  .thick { border-bottom-width: 4px; }
  .short.thick { height: 74px; padding-top: 14px; }
  .btn { display: flex; align-items: center; justify-content: center; height: 44px; border: 1.500px solid #457fbd; border-radius: 5px; background: #538bc6; color: #fff; font-size: 18.700px; white-space: nowrap; }
  .low { padding-top: 3px; }
  .high { padding-bottom: 4px; }
  .tall { height: 46px; padding-top: 1px; }
  .plain { height: 46px; border: 2px solid #ccc; background: #fff; color: #333; padding-top: 1px; font-size: 18.900px; }
  h4, p { margin: 0 -4px 0 0; font: 300 23.400px/28px Lato, sans-serif; font-variant-ligatures: none; }
  h4 { font-size: 23.700px; line-height: 26px; }
  .narrow { margin-right: 16px; }
  .legend { height: 110px; padding-top: 14px; }
  .symbol { display: flex; align-items: center; margin-top: 19px; padding-left: 4px; font: 16.200px/20px "DejaVu Sans", sans-serif; }
  .symbol i { width: 18px; height: 18px; margin-right: 9px; border: 3px solid #999286; border-radius: 2px; background: #e89a3a; }
  .story { height: 224px; padding-top: 26px; }
  .story p, .cache p, .perm p { margin-top: 13px; }
  .story .btn { margin-top: 15px; }
  .org { height: 104px; padding-top: 12px; }
  .org .btn { margin-top: 6px; }
  .init { height: 106px; padding-top: 14px; }
  .cache { height: 248px; padding-top: 26px; }
  .cache p { margin-top: 11px; }
  .cache .btn { margin-top: 15px; }
  .perm { padding-top: 26px; border-bottom: 0; }
</style>
